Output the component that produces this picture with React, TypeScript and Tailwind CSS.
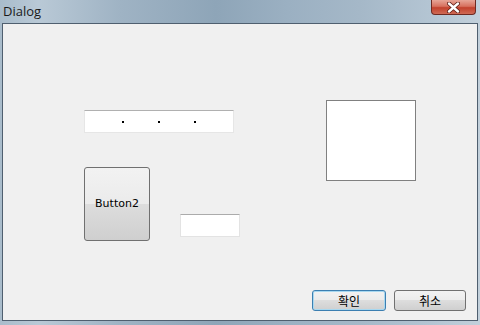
import React from "react";

export default function App() {
  const ko = { fontFamily: '"Noto Sans CJK KR", "Noto Sans", sans-serif' };
  return (
    <div
      className="w-[480px] h-[325px] flex flex-col overflow-hidden"
      style={{ fontFamily: '"DejaVu Sans", "Noto Sans", sans-serif' }}
    >
      <div className="w-full h-[325px] flex flex-col bg-[linear-gradient(90deg,#a9bccb_0%,#b9c9d6_8%,#9fb3c4_25%,#8ea5b8_45%,#9bb0c2_60%,#a5b8c8_75%,#b4c5d3_90%,#c2d0db_100%)]">
        {/* title bar */}
        <div className="h-[23px] flex items-start relative">
          <div
            className="pl-[3px] pt-[3px] text-[13px] leading-[16px] text-[#1a1a1a]"
            style={{ fontFamily: '"Open Sans", "Noto Sans", sans-serif' }}
          >
            Dialog
          </div>
          <div className="absolute left-[431px] top-0 w-[45px] h-[15px] rounded-b-[4px] border border-t-0 border-[#6e2a22] bg-[linear-gradient(180deg,#e7a597_0%,#d7715f_45%,#c2412d_55%,#cf6a55_100%)] flex items-center justify-center">
            <svg width="13" height="11" viewBox="0 0 13 11">
              <path
                d="M2 1.5 L11 9.5 M11 1.5 L2 9.5"
                stroke="#5a1a12"
                strokeWidth="4"
                strokeLinecap="round"
              />
              <path
                d="M2 1.5 L11 9.5 M11 1.5 L2 9.5"
                stroke="#ffffff"
                strokeWidth="2.4"
                strokeLinecap="round"
              />
            </svg>
          </div>
        </div>
        {/* client area */}
        <div className="mx-[2px] h-[298px] border border-[#4f5f6f] bg-[#f0f0f0] flex flex-col">
          <div className="flex flex-row">
            <div className="ml-[81px] mt-[86px] flex flex-col w-[156px]">
              <div className="w-[150px] h-[23px] bg-white border-t border-t-[#b0b0b0] border-x border-x-[#e6e6e6] border-b border-b-[#e6e6e6] relative flex items-center">
                <div className="flex w-full items-center">
                  <span className="ml-[37px] w-[2px] h-[2px] bg-black" />
                  <span className="ml-[34px] w-[2px] h-[2px] bg-black" />
                  <span className="ml-[34px] w-[2px] h-[2px] bg-black" />
                </div>
              </div>
              <div className="mt-[34px] flex flex-row items-start">
                <div className="w-[66px] h-[74px] rounded-[3px] border border-[#707070] bg-[linear-gradient(180deg,#f2f2f2_0%,#ebebeb_50%,#dddddd_50%,#cfcfcf_100%)] flex items-center justify-center text-[11px] text-black">
                  Button2
                </div>
                <div className="ml-[30px] mt-[47px] w-[60px] h-[23px] bg-white border-t border-t-[#ababab] border-x border-x-[#e3e3e3] border-b border-b-[#e3e3e3]" />
              </div>
            </div>
            <div className="ml-[86px] mt-[76px] w-[90px] h-[81px] bg-white border border-[#808080]" />
          </div>
          <div className="mt-auto mb-[9px] mr-[11px] flex flex-row justify-end gap-[8px]">
            <div
              className="w-[74px] h-[21px] rounded-[3px] border border-[#3c7fb1] bg-[linear-gradient(180deg,#f2f2f2_0%,#ebebeb_50%,#dddddd_50%,#cfcfcf_100%)] shadow-[inset_0_0_0_1px_#a8d8f0] flex items-center justify-center text-[12px] text-black"
              style={ko}
            >
              확인
            </div>
            <div
              className="w-[72px] h-[21px] rounded-[3px] border border-[#707070] bg-[linear-gradient(180deg,#f2f2f2_0%,#ebebeb_50%,#dddddd_50%,#cfcfcf_100%)] flex items-center justify-center text-[12px] text-black"
              style={ko}
            >
              취소
            </div>
          </div>
        </div>
      </div>
    </div>
  );
}
